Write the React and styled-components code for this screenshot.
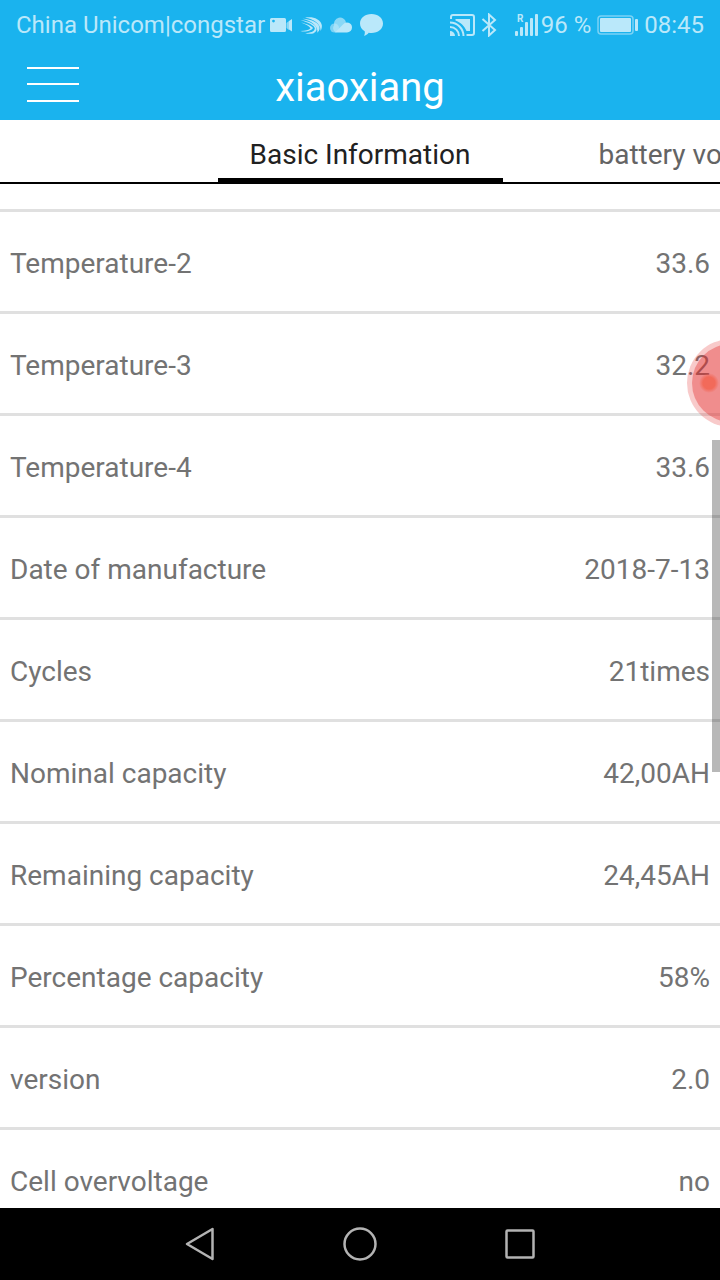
import React, { useState } from 'react';
import styled, { createGlobalStyle } from 'styled-components';

const readings = [
  { label: 'Temperature-2', value: '33.6' },
  { label: 'Temperature-3', value: '32.2' },
  { label: 'Temperature-4', value: '33.6' },
  { label: 'Date of manufacture', value: '2018-7-13' },
  { label: 'Cycles', value: '21times' },
  { label: 'Nominal capacity', value: '42,00AH' },
  { label: 'Remaining capacity', value: '24,45AH' },
  { label: 'Percentage capacity', value: '58%' },
  { label: 'version', value: '2.0' },
  { label: 'Cell overvoltage', value: 'no' },
];

function VideoIcon() {
  return (
    <svg width="22" height="16" viewBox="0 0 22 16" fill="currentColor">
      <path
        fillRule="evenodd"
        d="M1.5 1h13A1.5 1.5 0 0 1 16 2.500v11a1.500 1.500 0 0 1-1.500 1.500h-13A1.500 1.500 0 0 1 0 13.500v-11A1.500 1.500 0 0 1 1.500 1zM3.500 2.700a1.400 1.400 0 1 0 0 2.800 1.400 1.400 0 0 0 0-2.800z"
      />
      <path d="M16.5 6L19 4v9l-2.500-2z" opacity="0.7" />
      <path d="M19 4l3-2v12.500l-3-2z" />
    </svg>
  );
}

function WingIcon() {
  return (
    <svg width="22" height="17" viewBox="0 0 22 17" fill="currentColor">
      <path d="M5 .8C12-.8 20 1.500 21.800 8c.3 2.500-.3 4.500-1.300 6C21 7 14 2 5 .8z" />
      <path d="M2.500 1.700C12 2 19.500 6 19.600 11c0 2-1 3.500-2.300 4.800C18.500 9.500 12 4 2.500 1.700z" />
      <path d="M.5 3C9 4 16.500 7.500 16.600 12c0 2-1.200 3.400-3.400 4.500-3 .6-6 .4-8-.5 5 0 9.500-1.500 9.600-4.500C14.800 8.500 8 5.500.5 3z" />
      <path d="M1 5.500c6 1.500 11 3.500 12 5.500-1.500 3-8 4.500-12.500 3C5 14 9 13 10.500 11.200 9 9 5 7 1 5.500z" />
    </svg>
  );
}

function CloudIcon() {
  return (
    <svg width="22" height="16" viewBox="0 0 22 16" fill="currentColor">
      <circle cx="4.5" cy="11" r="4.5" opacity="0.6" />
      <path
        d="M5 15a5 5 0 0 1-.8-7A6 6 0 0 1 16 5.200L11 15z"
        opacity="0.7"
      />
      <path d="M5 15.500L13 7.500a5 5 0 0 1 9 3 5 5 0 0 1-5 5z" />
    </svg>
  );
}

function ChatIcon() {
  return (
    <svg width="23" height="22" viewBox="0 0 23 22" fill="currentColor">
      <path d="M11.500 0C18 0 23 4 23 9.500S18 19 11.500 19c-1 0-2 0-2.800-.3C7.500 20.500 5.500 21.500 4 21.800c.8-1.300 1-2.800.7-4.500C1.700 15.500 0 12.800 0 9.500 0 4 5 0 11.500 0z" />
    </svg>
  );
}

function CastIcon() {
  return (
    <svg
      width="25"
      height="22"
      viewBox="0 0 25 22"
      fill="none"
      stroke="currentColor"
      strokeWidth="2"
    >
      <path d="M1 5V3a2 2 0 0 1 2-2h19a2 2 0 0 1 2 2v16a2 2 0 0 1-2 2h-5.500" />
      <path
        d="M5.500 5H20v12h-3.500C14.500 12 10.500 8.300 5.500 6.500z"
        fill="currentColor"
        stroke="none"
      />
      <path d="M0 8.500A13.500 13.500 0 0 1 13.500 22" />
      <path d="M0 13A9 9 0 0 1 9 22" />
      <path d="M0 17a5 5 0 0 1 5 5H0z" fill="currentColor" stroke="none" />
    </svg>
  );
}

function BluetoothIcon() {
  return (
    <svg
      width="16"
      height="24"
      viewBox="0 0 16 24"
      fill="none"
      stroke="currentColor"
      strokeWidth="2"
    >
      <path d="M1.500 6L14 17l-6 5.500v-21L14 7 1.500 18" />
    </svg>
  );
}

function SignalIcon() {
  return (
    <svg width="23" height="24" viewBox="0 0 23 24" fill="currentColor">
      <text x="2" y="9" fontSize="10" fontWeight="700">
        R
      </text>
      <rect x="0" y="18" width="3" height="5" rx="1" />
      <rect x="5" y="14" width="3" height="9" rx="1" />
      <rect x="10" y="9" width="3" height="14" rx="1" />
      <rect x="15" y="5" width="3" height="18" rx="1" />
      <rect x="20" y="1" width="3" height="22" rx="1" />
    </svg>
  );
}

function BatteryIcon() {
  return (
    <svg width="41" height="20" viewBox="0 0 41 20" fill="currentColor">
      <rect
        x="1"
        y="1"
        width="35"
        height="18"
        rx="3"
        fill="none"
        stroke="currentColor"
        strokeWidth="1.5"
        opacity="0.6"
      />
      <rect x="3" y="3" width="31" height="14" rx="1" />
      <rect x="38" y="4" width="3" height="12" rx="1" />
    </svg>
  );
}

function RecordIcon() {
  return (
    <svg width="88" height="88" viewBox="0 0 88 88">
      <defs>
        <radialGradient id="dot">
          <stop offset="0.6" stopColor="#f26a5a" />
          <stop offset="1" stopColor="#f26a5a" stopOpacity="0" />
        </radialGradient>
      </defs>
      <circle cx="44" cy="44" r="44" fill="#e22a2a" fillOpacity="0.25" />
      <circle cx="44" cy="44" r="39" fill="#e22a2a" fillOpacity="0.38" />
      <circle cx="22" cy="44" r="10" fill="url(#dot)" />
    </svg>
  );
}

function StatusBar() {
  return (
    <StyledStatus>
      <span>China Unicom|congstar</span>
      <Notices>
        <VideoIcon />
        <WingIcon />
        <CloudIcon />
        <ChatIcon />
      </Notices>
      <System>
        <CastIcon />
        <BluetoothIcon />
        <Charge>
          <SignalIcon />
          <span>96 %</span>
        </Charge>
        <BatteryIcon />
        <span>08:45</span>
      </System>
    </StyledStatus>
  );
}

function NavBar() {
  return (
    <StyledNav>
      <NavButton type="button" aria-label="Back">
        <svg width="36" height="36" viewBox="0 0 36 36">
          <path d="M5 18L30.500 3v30z" />
        </svg>
      </NavButton>
      <NavButton type="button" aria-label="Home">
        <svg width="36" height="36" viewBox="0 0 36 36">
          <circle cx="18" cy="18" r="15.5" />
        </svg>
      </NavButton>
      <NavButton type="button" aria-label="Recent apps">
        <svg width="36" height="36" viewBox="0 0 36 36">
          <rect x="4.5" y="4.5" width="27" height="27" rx="1" />
        </svg>
      </NavButton>
    </StyledNav>
  );
}

function App() {
  const [tab, setTab] = useState('basic');

  return (
    <Screen>
      <GlobalStyle />
      <StatusBar />
      <Header>
        <MenuButton type="button" aria-label="Menu">
          <i />
          <i />
          <i />
        </MenuButton>
        <h1>xiaoxiang</h1>
      </Header>
      <Tabs role="tablist">
        <Tab
          type="button"
          role="tab"
          $active={tab === 'basic'}
          aria-selected={tab === 'basic'}
          onClick={() => setTab('basic')}
        >
          Basic Information
        </Tab>
        <NextTab>
          <Tab
            type="button"
            role="tab"
            $active={tab === 'voltage'}
            aria-selected={tab === 'voltage'}
            onClick={() => setTab('voltage')}
          >
            battery voltage
          </Tab>
        </NextTab>
      </Tabs>
      <Content>
        <List>
          {readings.map(({ label, value }) => (
            <Row key={label}>
              <dt>{label}</dt>
              <dd>{value}</dd>
            </Row>
          ))}
        </List>
        <ScrollThumb />
        <RecordButton type="button" aria-label="Record">
          <RecordIcon />
        </RecordButton>
      </Content>
      <NavBar />
    </Screen>
  );
}

export default App;

const GlobalStyle = createGlobalStyle`
  * {
    box-sizing: border-box;
  }

  body {
    margin: 0;
    background: #fff;
    font-family: Roboto, sans-serif;
  }

  button {
    margin: 0;
    padding: 0;
    border: 0;
    background: none;
    font: inherit;
    cursor: pointer;
  }

  svg {
    display: block;
    flex-shrink: 0;
  }
`;

const Screen = styled.div`
  display: flex;
  flex-direction: column;
  height: 100vh;
  overflow: hidden;
`;

const StyledStatus = styled.div`
  display: flex;
  flex-shrink: 0;
  align-items: center;
  height: 50px;
  padding: 0 16px;
  background: #1ab3ee;
  color: #bae8fa;
  font-size: 24px;
  line-height: 28px;
  white-space: nowrap;
`;

const Notices = styled.div`
  display: flex;
  align-items: center;
  gap: 8px;
  margin-left: 5px;
`;

const System = styled.div`
  display: flex;
  align-items: center;
  gap: 6px;
  margin-left: auto;
`;

const Charge = styled.div`
  display: flex;
  align-items: center;
  gap: 3px;
  margin-left: 12px;
`;

const Header = styled.header`
  display: grid;
  grid-template-columns: 1fr auto 1fr;
  flex-shrink: 0;
  align-items: center;
  height: 70px;
  padding: 0 27px 2px;
  background: #1ab3ee;
  color: #fff;

  h1 {
    margin: 0;
    padding-top: 8px;
    font-size: 40px;
    font-weight: 400;
    line-height: 48px;
  }
`;

const MenuButton = styled.button`
  display: flex;
  flex-direction: column;
  justify-content: space-between;
  width: 52px;
  height: 35px;

  i {
    height: 2px;
    background: #fff;
  }
`;

const Tabs = styled.div`
  display: grid;
  grid-template-columns: minmax(0, 1fr) auto minmax(0, 1fr);
  flex-shrink: 0;
  height: 64px;
  box-shadow: inset 0 -2px #000;
`;

const Tab = styled.button`
  grid-column: 2;
  height: 64px;
  padding: 12px 32px 0;
  border-bottom: 6px solid ${({ $active }) => ($active ? '#000' : 'transparent')};
  color: ${({ $active }) => ($active ? '#212121' : '#646464')};
  font-size: 28px;
  line-height: 32px;
  white-space: nowrap;
`;

const NextTab = styled.div`
  grid-column: 3;
  padding-left: 64px;
  overflow: hidden;
`;

const Content = styled.main`
  position: relative;
  flex: 1;
  min-height: 0;
  overflow: hidden;
`;

const List = styled.dl`
  margin: 0;
  padding-top: 25px;
`;

const Row = styled.div`
  display: flex;
  align-items: center;
  justify-content: space-between;
  height: 102px;
  padding: 4px 10px 0;
  border-top: 3px solid #e0e0e0;
  color: #737373;
  font-size: 28px;
  line-height: 32px;

  dd {
    margin: 0;
  }
`;

const ScrollThumb = styled.div`
  position: absolute;
  top: 25%;
  right: 0;
  width: 8px;
  height: 332px;
  background: rgba(0, 0, 0, 0.28);
`;

const RecordButton = styled.button`
  position: absolute;
  top: 155px;
  right: -55px;
`;

const StyledNav = styled.nav`
  display: flex;
  flex-shrink: 0;
  justify-content: center;
  height: 72px;
  background: #000;
`;

const NavButton = styled.button`
  display: flex;
  align-items: center;
  justify-content: center;
  width: 160px;

  svg {
    fill: none;
    stroke: #b3b3b3;
    stroke-width: 2.5;
    stroke-linejoin: round;
  }
`;
